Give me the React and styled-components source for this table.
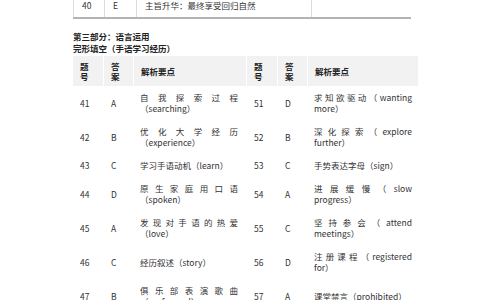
import React from 'react';
import styled, { createGlobalStyle } from 'styled-components';

const GlobalStyle = createGlobalStyle`
  html, body {
    margin: 0;
    padding: 0;
    background: #fff;
  }
  body {
    font-family: "Noto Sans CJK SC", "Noto Sans", sans-serif;
    color: #333;
    overflow: hidden;
    text-spacing-trim: space-all;
  }
`;

const Page = styled.div`
  width: 484px;
  height: 300px;
  overflow: hidden;
  padding-left: 73px;
  box-sizing: border-box;
`;

const PrevTable = styled.div`
  display: grid;
  grid-template-columns: 32px 32px 175px 99px;
  width: 338px;
  margin-top: -6px;
  border-bottom: 2px solid #b3b3b3;
`;

const PrevCell = styled.div`
  padding: 6px 8px;
  font-size: 8.5px;
  line-height: 11px;
  border-left: ${p => (p.$first ? '1px solid #dcdcdc' : 'none')};
  border-right: ${p => (p.$last ? 'none' : '1px solid #dcdcdc')};
`;

const SectionTitle = styled.div`
  margin-top: ${p => p.$gap}px;
  font-size: 8.5px;
  line-height: 12px;
  font-weight: 700;
  color: #222;
`;

const Table = styled.div`
  display: grid;
  grid-template-columns: 30px 29px 112px 30px 29px 110px;
  column-gap: 1px;
  align-items: center;
  width: 345px;
  margin-top: 2px;
`;

const HeadCell = styled.div`
  display: flex;
  align-items: center;
  height: 30px;
  padding: 0 7px;
  background: #f2f2f2;
  font-size: 8.5px;
  line-height: 10px;
  font-weight: 700;
  color: #222;
`;

const Cell = styled.div`
  padding: 6px 6px 6px 7px;
  font-size: 8.5px;
  line-height: 11px;
`;

// explanation column: justified, a bit narrower on the left half so long lines wrap
const Explain = styled(Cell)`
  padding: 6px ${p => (p.$side === 0 ? 8 : 6)}px 6px 6px;
  text-align: justify;
`;

const rows = [
  [['41', 'A', '自我探索过程（searching）'], ['51', 'D', '求知欲驱动（wanting more）']],
  [['42', 'B', '优化大学经历（experience）'], ['52', 'B', '深化探索（explore further）']],
  [['43', 'C', '学习手语动机（learn）'], ['53', 'C', '手势表达字母（sign）']],
  [['44', 'D', '原生家庭用口语（spoken）'], ['54', 'A', '进展缓慢（slow progress）']],
  [['45', 'A', '发现对手语的热爱（love）'], ['55', 'C', '坚持参会（attend meetings）']],
  [['46', 'C', '经历叙述（story）'], ['56', 'D', '注册课程（registered for）']],
  [['47', 'B', '俱乐部表演歌曲（performed）'], ['57', 'A', '课堂禁言（prohibited）']],
];

const headers = ['题号', '答案', '解析要点', '题号', '答案', '解析要点'];

export default function App() {
  return (
    <Page>
      <GlobalStyle />
      <PrevTable>
        <PrevCell $first>40</PrevCell>
        <PrevCell>E</PrevCell>
        <PrevCell>主旨升华：最终享受回归自然</PrevCell>
        <PrevCell $last />
      </PrevTable>

      <SectionTitle $gap={11}>第三部分：语言运用</SectionTitle>
      <SectionTitle $gap={0}>完形填空（手语学习经历）</SectionTitle>

      <Table>
        {headers.map((h, i) => (
          <HeadCell key={'h' + i}>{h}</HeadCell>
        ))}
        {rows.map((pair, r) =>
          pair.map(([num, ans, text], s) => (
            <React.Fragment key={r + '-' + s}>
              <Cell>{num}</Cell>
              <Cell>{ans}</Cell>
              <Explain $side={s}>{text}</Explain>
            </React.Fragment>
          ))
        )}
      </Table>
    </Page>
  );
}
